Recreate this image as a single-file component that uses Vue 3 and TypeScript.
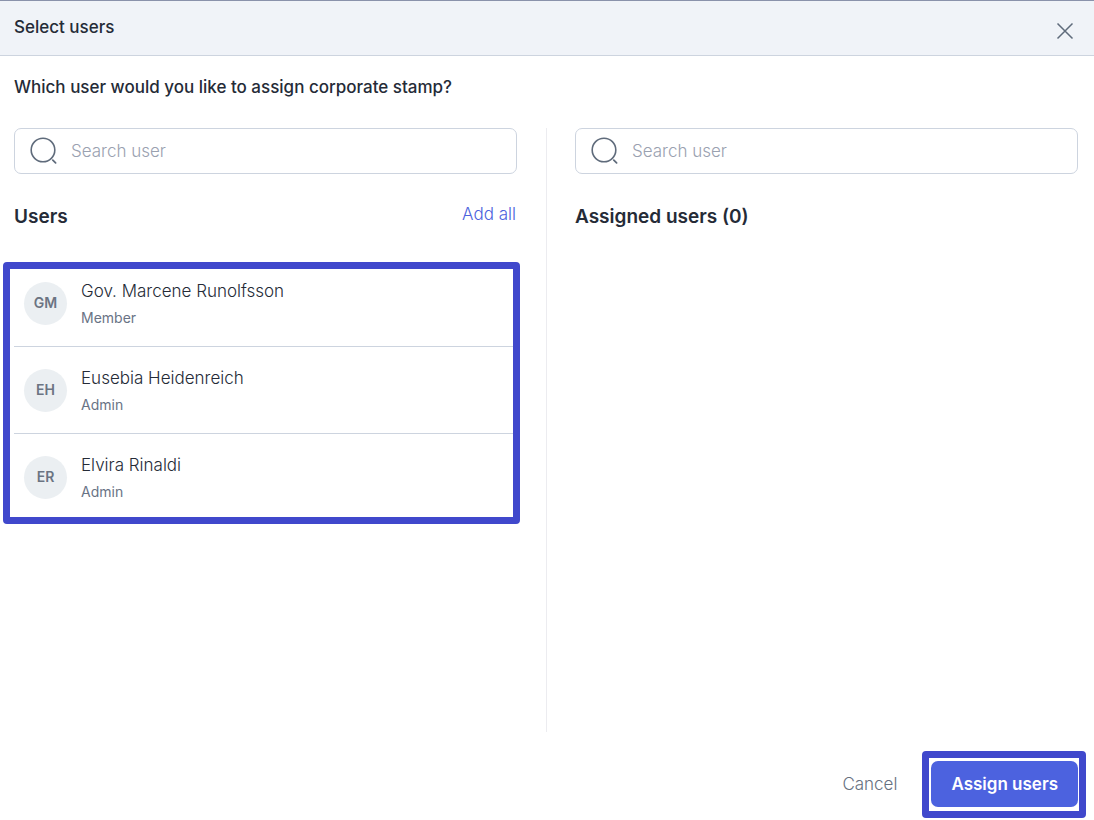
<script setup lang="ts">
import { computed, ref } from 'vue'

interface User {
  initials: string
  name: string
  role: string
}

const users: User[] = [
  { initials: 'GM', name: 'Gov. Marcene Runolfsson', role: 'Member' },
  { initials: 'EH', name: 'Eusebia Heidenreich', role: 'Admin' },
  { initials: 'ER', name: 'Elvira Rinaldi', role: 'Admin' },
]

const assigned = ref<User[]>([])
const userQuery = ref('')
const assignedQuery = ref('')

const matches = (user: User, query: string) =>
  user.name.toLowerCase().includes(query.trim().toLowerCase())

const available = computed(() =>
  users.filter((u) => !assigned.value.includes(u) && matches(u, userQuery.value)),
)
const visibleAssigned = computed(() => assigned.value.filter((u) => matches(u, assignedQuery.value)))

function addAll() {
  assigned.value = [...users]
}
</script>

<template>
  <div class="dialog" role="dialog" aria-labelledby="dialog-title">
    <header class="header">
      <h1 id="dialog-title" class="title">Select users</h1>
      <button class="close" type="button" aria-label="Close">
        <svg width="18" height="18" viewBox="0 0 18 18" fill="none" stroke="currentColor" stroke-width="1.5">
          <path d="M1.5 1.5 16.5 16.5M16.5 1.5 1.5 16.5" />
        </svg>
      </button>
    </header>

    <main class="body">
      <p class="question">Which user would you like to assign corporate stamp?</p>
      <div class="columns">
        <section class="column">
          <label class="search">
            <svg class="search-icon" width="28" height="28" viewBox="0 0 28 28" fill="none" stroke="currentColor">
              <circle cx="14" cy="13" r="11.8" stroke-width="1.6" />
              <path d="M23.8 23.2 26.6 25.8" stroke-width="1.8" stroke-linecap="round" />
            </svg>
            <input v-model="userQuery" type="text" placeholder="Search user" aria-label="Search user" />
          </label>
          <div class="column-head">
            <h2 class="heading">Users</h2>
            <button class="add-all" type="button" @click="addAll">Add all</button>
          </div>
          <div class="list-wrap">
            <ul class="list">
              <li v-for="user in available" :key="user.name" class="row">
                <span class="avatar">{{ user.initials }}</span>
                <div class="info">
                  <span class="name">{{ user.name }}</span>
                  <span class="role">{{ user.role }}</span>
                </div>
              </li>
            </ul>
            <div class="frame list-frame"></div>
          </div>
        </section>

        <div class="divider"></div>

        <section class="column">
          <label class="search">
            <svg class="search-icon" width="28" height="28" viewBox="0 0 28 28" fill="none" stroke="currentColor">
              <circle cx="14" cy="13" r="11.8" stroke-width="1.6" />
              <path d="M23.8 23.2 26.6 25.8" stroke-width="1.8" stroke-linecap="round" />
            </svg>
            <input v-model="assignedQuery" type="text" placeholder="Search user" aria-label="Search assigned user" />
          </label>
          <div class="column-head">
            <h2 class="heading">Assigned users ({{ assigned.length }})</h2>
          </div>
          <ul class="list">
            <li v-for="user in visibleAssigned" :key="user.name" class="row">
              <span class="avatar">{{ user.initials }}</span>
              <div class="info">
                <span class="name">{{ user.name }}</span>
                <span class="role">{{ user.role }}</span>
              </div>
            </li>
          </ul>
        </section>
      </div>
    </main>

    <footer class="footer">
      <button class="cancel" type="button">Cancel</button>
      <div class="submit-wrap">
        <button class="submit" type="button">Assign users</button>
        <div class="frame submit-frame"></div>
      </div>
    </footer>
  </div>
</template>

<style>
body {
  background: #fff;
}
</style>

<style scoped>
.dialog,
.dialog * {
  box-sizing: border-box;
}

.dialog {
  display: flex;
  flex-direction: column;
  min-height: 100vh;
  border-top: 1px solid #8a92ab;
  color: #252b37;
  font-family: Inter, 'Liberation Sans', sans-serif;
  font-size: 17px;
  font-weight: 350;
  line-height: 24px;
}

button {
  padding: 0;
  border: 0;
  background: none;
  font: inherit;
  cursor: pointer;
}

h1,
h2,
p,
ul {
  margin: 0;
  padding: 0;
}

.header {
  display: flex;
  justify-content: space-between;
  padding: 14px 20px 16px 14px;
  border-bottom: 1px solid #cdd4df;
  background: #f0f3f8;
}

.title,
.question {
  font-size: 17px;
  font-weight: 550;
  line-height: 24px;
}

.close {
  display: grid;
  place-items: center;
  width: 18px;
  height: 32px;
  margin-bottom: -8px;
  color: #5f6b7b;
}

.body {
  display: flex;
  flex: 1;
  flex-direction: column;
  padding: 19px 16px 0 14px;
}

.columns {
  display: grid;
  flex: 1;
  grid-template-columns: 1fr 2px 1fr;
  gap: 28px;
  margin-top: 29px;
}

.divider {
  border-right: 1px solid #ececf0;
}

.search {
  display: flex;
  align-items: center;
  gap: 14px;
  height: 46px;
  padding: 0 14px;
  border: 1px solid #cdd4df;
  border-radius: 7px;
}

.search-icon {
  flex: none;
  color: #5f6b7b;
}

.search input {
  flex: 1;
  min-width: 0;
  padding: 0;
  border: 0;
  outline: 0;
  background: none;
  color: inherit;
  font: inherit;
}

.search input::placeholder {
  color: #9aa1b0;
  opacity: 1;
}

.column-head {
  display: flex;
  align-items: flex-start;
  justify-content: space-between;
  height: 56px;
  margin-top: 28px;
  padding-right: 1px;
}

.heading {
  padding-top: 3px;
  font-size: 19px;
  font-weight: 600;
  line-height: 24px;
}

.add-all {
  color: #4d62dd;
}

.list-wrap {
  position: relative;
  margin-top: 2px;
}

.list {
  list-style: none;
}

.row {
  display: flex;
  align-items: center;
  gap: 14px;
  height: 87px;
  padding-left: 10px;
  border-bottom: 1px solid #cdd4df;
}

.row:last-child {
  border-bottom-color: transparent;
}

.avatar {
  display: grid;
  flex: none;
  place-items: center;
  width: 43px;
  height: 43px;
  border-radius: 50%;
  background: #ebeff2;
  color: #6b7482;
  font-size: 14px;
  font-weight: 600;
}

.name {
  font-weight: 300;
}

.info {
  display: flex;
  flex-direction: column;
  gap: 4px;
  padding-top: 2px;
}

.role {
  color: #697385;
  font-size: 14px;
  font-weight: 400;
  line-height: 22px;
}

.frame {
  position: absolute;
  border: 7px solid #4048cc;
  border-radius: 4px;
  pointer-events: none;
}

.list-frame {
  inset: 2px -3px -3px -11px;
}

.footer {
  display: flex;
  align-items: center;
  justify-content: flex-end;
  gap: 34px;
  padding: 29px 16px 13px;
}

.cancel {
  color: #667080;
}

.submit-wrap {
  position: relative;
}

.submit {
  height: 46px;
  padding: 0 20px;
  border-radius: 7px;
  background: #4c62df;
  color: #fff;
  font-weight: 600;
}

.submit-frame {
  inset: -10px -8px -11px -9px;
}
</style>
